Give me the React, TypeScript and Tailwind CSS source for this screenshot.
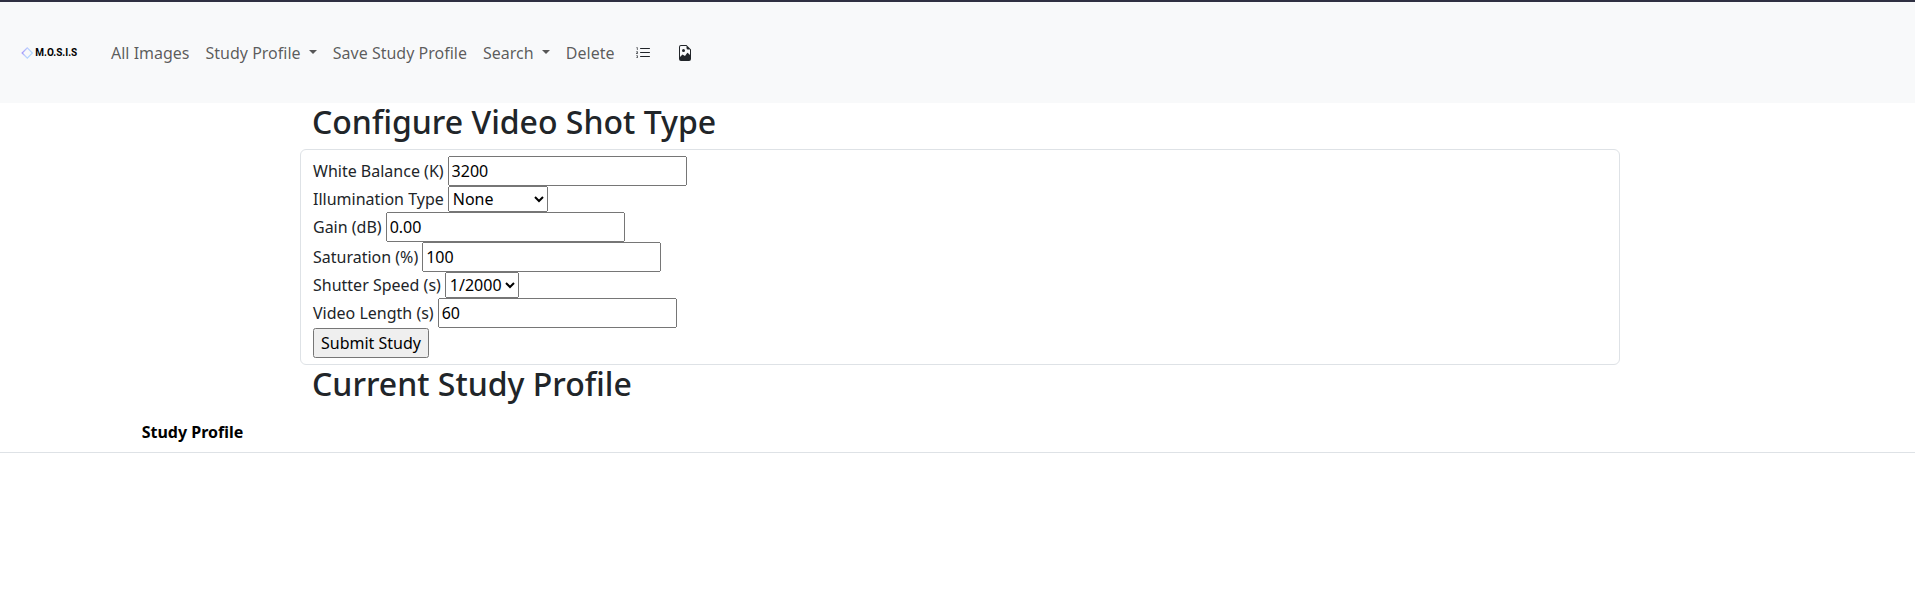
import type { ReactNode } from "react";
import { BsFileEarmarkImage, BsListOl } from "react-icons/bs";

const nativeField =
  "[border:revert] [background:revert] [border-radius:revert] [padding:revert] text-black";

function NavLink({ children, caret = false }: { children: ReactNode; caret?: boolean }) {
  return (
    <a href="#" className="flex items-center px-2 py-2 whitespace-nowrap text-black/65">
      {children}
      {caret && (
        <span className="ml-[8.24px] -mt-px border-x-[4.8px] border-t-[4.8px] border-x-transparent border-t-current" />
      )}
    </a>
  );
}

function Row({ label, children, select = false }: { label: string; children: ReactNode; select?: boolean }) {
  return (
    <div className={select ? "flex h-[26px] items-center gap-1" : "flex h-[30px] items-center gap-1"}>
      <label className="whitespace-nowrap">{label}</label>
      {children}
    </div>
  );
}

function TextField({ value }: { value: string }) {
  return <input type="text" defaultValue={value} className={`${nativeField} h-[30px] w-[239px]`} />;
}

function Logo() {
  return (
    <a href="#" className="flex w-[56px] items-center">
      <svg width="12" height="12" viewBox="0 0 12 12" fill="none" className="shrink-0">
        <defs>
          <linearGradient id="mark" x1="0" y1="4" x2="12" y2="8" gradientUnits="userSpaceOnUse">
            <stop stopColor="#9a80f7" />
            <stop offset="0.4" stopColor="#bccdfe" />
            <stop offset="1" stopColor="#afdcff" />
          </linearGradient>
        </defs>
        <path d="M6.3 .9 11.4 6 6.3 11.1 1.2 6Z" stroke="url(#mark)" strokeWidth="1.3" />
      </svg>
      <span className="ml-[2.3px] font-[Roboto] text-[10px] leading-none font-bold text-black">M.O.S.I.S</span>
    </a>
  );
}

export default function App() {
  return (
    <div className="min-h-screen bg-white font-['Noto_Sans',sans-serif] text-base leading-6 text-[#212529]">
      <nav className="flex h-[103px] items-center border-t-2 border-[#2f3042] bg-[#f8f9fa] pl-[21px]">
        <Logo />
        <div className="ml-[26px] flex items-center">
          <NavLink>All Images</NavLink>
          <NavLink caret>Study Profile</NavLink>
          <NavLink>Save Study Profile</NavLink>
          <NavLink caret>Search</NavLink>
          <NavLink>Delete</NavLink>
          <button type="button" className="ml-[12.8px]">
            <BsListOl size={16} />
          </button>
          <button type="button" className="ml-[26px]">
            <BsFileEarmarkImage size={16} />
          </button>
        </div>
      </nav>

      <main>
        <section className="ml-[300px] w-[1320px]">
          <h2 className="mb-2 pl-3 text-[32px] leading-[38px] font-medium">Configure Video Shot Type</h2>
          <form className="rounded-md border border-[#dee2e6] px-3 py-1.5">
            <Row label="White Balance (K)">
              <TextField value="3200" />
            </Row>
            <Row label="Illumination Type" select>
              <select className={`${nativeField} h-[26px] w-[100px]`}>
                <option>None</option>
              </select>
            </Row>
            <Row label="Gain (dB)">
              <TextField value="0.00" />
            </Row>
            <Row label="Saturation (%)">
              <TextField value="100" />
            </Row>
            <Row label="Shutter Speed (s)" select>
              <select className={`${nativeField} h-[26px] w-[74px]`}>
                <option>1/2000</option>
              </select>
            </Row>
            <Row label="Video Length (s)">
              <TextField value="60" />
            </Row>
            <button type="button" className={`${nativeField} block h-[30px] w-[116px] whitespace-nowrap`}>
              Submit Study
            </button>
          </form>
          <h2 className="mb-[9px] pl-3 text-[32px] leading-[38px] font-medium">Current Study Profile</h2>
        </section>

        <table className="w-full table-fixed border-separate border-spacing-0">
          <thead>
            <tr>
              <th className="w-[385px] border-b border-[#dee2e6] p-2 text-center font-bold text-black">
                Study Profile
              </th>
              <th className="border-b border-[#dee2e6]" />
            </tr>
          </thead>
        </table>
      </main>
    </div>
  );
}
